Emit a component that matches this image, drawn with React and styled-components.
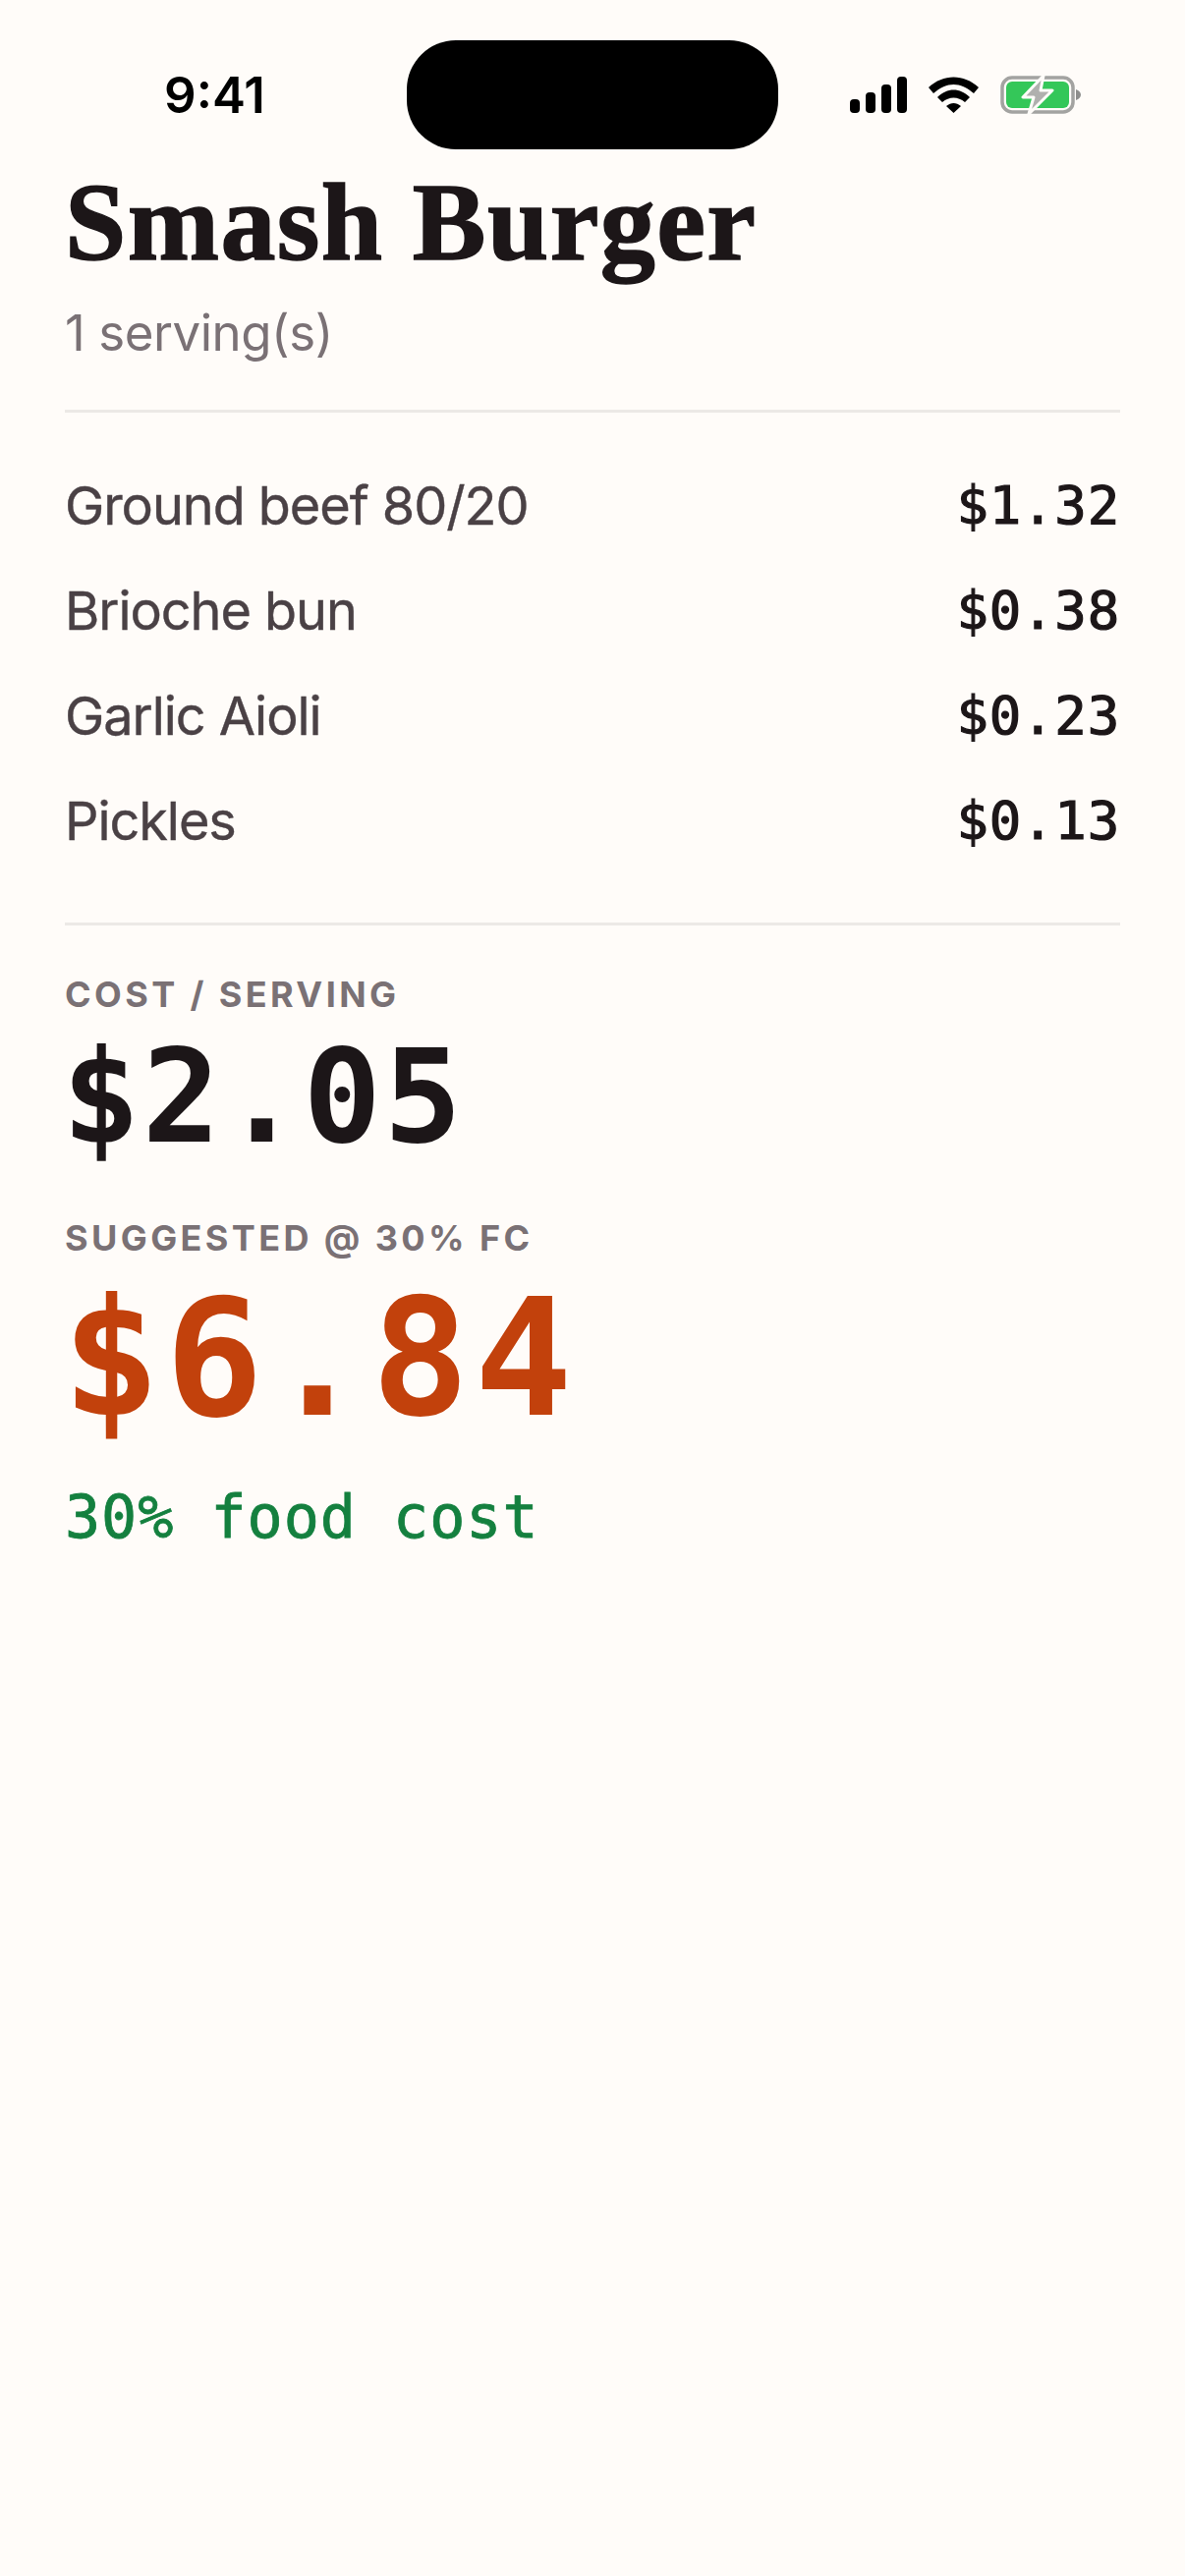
import React from "react";
import styled, { createGlobalStyle } from "styled-components";

const GlobalStyle = createGlobalStyle`
  html, body {
    margin: 0;
    padding: 0;
    background: #fffcf9;
  }
`;

const Page = styled.div`
  width: 1206px;
  min-height: 2622px;
  background: #fffcf9;
  box-sizing: border-box;
`;

const StatusBar = styled.div`
  display: grid;
  grid-template-columns: 414px 378px 1fr;
  height: 111px;
  padding-top: 41px;
  align-items: center;
`;

const Time = styled.div`
  font-family: "Inter", sans-serif;
  font-weight: 600;
  font-size: 51px;
  color: #000;
  text-align: center;
  padding-left: 23px;
`;

const Island = styled.div`
  height: 111px;
  background: #000;
  border-radius: 50px;
`;

const StatusIcons = styled.div`
  display: flex;
  align-items: center;
  gap: 22px;
  padding-left: 73px;
`;

const Content = styled.main`
  padding: 0 66px;
`;

const Title = styled.h1`
  margin: 12px 0 0;
  font-family: "Liberation Serif", serif;
  font-weight: 700;
  font-size: 112px;
  line-height: 124px;
  letter-spacing: 1.4px;
  -webkit-text-stroke: 1.5px #1c1618;
  color: #1c1618;
`;

const Servings = styled.div`
  margin-top: 18px;
  font-family: "Inter", sans-serif;
  font-size: 51px;
  line-height: 66px;
  letter-spacing: -0.45px;
  color: #7a7175;
`;

const Rows = styled.div`
  margin-top: 45px;
  padding: 41px 0 50px;
  border-top: 3px solid #ece9e6;
  border-bottom: 3px solid #ece9e6;
`;

const Row = styled.div`
  display: flex;
  justify-content: space-between;
  align-items: center;
  height: 107px;
`;

const ItemName = styled.span`
  font-family: "Inter", sans-serif;
  font-size: 54px;
  letter-spacing: -1.05px;
  -webkit-text-stroke: 0.4px #4a4145;
  color: #4a4145;
`;

const ItemPrice = styled.span`
  font-family: "DejaVu Sans Mono", monospace;
  font-size: 54px;
  letter-spacing: 0.8px;
  -webkit-text-stroke: 1.2px #1c1618;
  color: #1c1618;
`;

const Label = styled.div`
  margin-top: ${(p) => p.$top}px;
  font-family: "Inter", sans-serif;
  font-weight: 700;
  font-size: 36px;
  line-height: 44px;
  letter-spacing: 3.4px;
  color: #7a7175;
`;

const Amount = styled.div`
  margin-top: ${(p) => p.$top}px;
  margin-left: -3px;
  font-family: "DejaVu Sans Mono", monospace;
  font-weight: 700;
  font-size: ${(p) => p.$size}px;
  line-height: ${(p) => p.$line}px;
  letter-spacing: ${(p) => p.$spacing}px;
  color: ${(p) => p.$color};
`;

const Note = styled.div`
  margin-top: 25px;
  font-family: "DejaVu Sans Mono", monospace;
  font-size: 60px;
  line-height: 76px;
  letter-spacing: 1px;
  -webkit-text-stroke: 0.8px #14803f;
  color: #14803f;
`;

const SignalIcon = () => (
  <svg width="58" height="37" viewBox="0 0 58 37">
    <rect x="0" y="23" width="10" height="14" rx="4" fill="#000" />
    <rect x="16" y="16" width="10" height="21" rx="4" fill="#000" />
    <rect x="32" y="8" width="10" height="29" rx="4" fill="#000" />
    <rect x="48" y="0" width="10" height="37" rx="4" fill="#000" />
  </svg>
);

const WifiIcon = () => (
  <svg width="51" height="37" viewBox="0 0 51 37">
    <path d="M0 11 C15 -3 36 -3 51 11 L46 17 C32 5 19 5 5 17 Z" fill="#000" />
    <path d="M9 21 C19 11 32 11 42 21 L37 26 C30 20 21 20 14 26 Z" fill="#000" />
    <path d="M18 30 C23 26 28 26 33 30 L25.5 37 Z" fill="#000" />
  </svg>
);

const BatteryIcon = () => (
  <svg width="82" height="41" viewBox="0 0 82 41">
    <rect x="2" y="3" width="72" height="35" rx="10" fill="none" stroke="#a3a3a1" strokeWidth="3.5" />
    <rect x="6" y="7" width="64" height="27" rx="6" fill="#34c759" />
    <path d="M77 15 C80 16 82 18 82 20.5 C82 23 80 25 77 26 Z" fill="#8e8e8c" />
    <path
      d="M44 1 L23 23 H34 L29 40 L53 16 H41 Z"
      fill="#b0b0ae"
      stroke="#fffcf9"
      strokeWidth="3"
      strokeLinejoin="round"
    />
  </svg>
);

const items = [
  ["Ground beef 80/20", "$1.32"],
  ["Brioche bun", "$0.38"],
  ["Garlic Aioli", "$0.23"],
  ["Pickles", "$0.13"],
];

const App = () => (
  <>
    <GlobalStyle />
    <Page>
      <StatusBar>
        <Time>9:41</Time>
        <Island />
        <StatusIcons>
          <SignalIcon />
          <WifiIcon />
          <BatteryIcon />
        </StatusIcons>
      </StatusBar>
      <Content>
        <Title>Smash Burger</Title>
        <Servings>1 serving(s)</Servings>
        <Rows>
          {items.map(([name, price]) => (
            <Row key={name}>
              <ItemName>{name}</ItemName>
              <ItemPrice>{price}</ItemPrice>
            </Row>
          ))}
        </Rows>
        <Label $top={48}>COST / SERVING</Label>
        <Amount $top={3} $size={132} $line={158} $spacing={2.4} $color="#1c1618">$2.05</Amount>
        <Label $top={43}>SUGGESTED @ 30% FC</Label>
        <Amount $top={3} $size={166} $line={196} $spacing={5} $color="#c2410c">$6.84</Amount>
        <Note>30% food cost</Note>
      </Content>
    </Page>
  </>
);

export default App;
